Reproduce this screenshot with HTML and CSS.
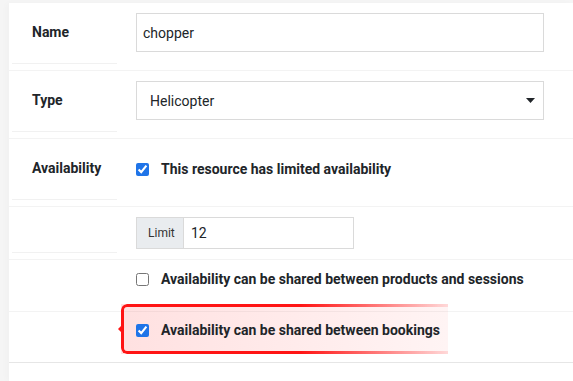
FILE: index.html
```html
<!DOCTYPE html>
<html lang="en">
<head>
<meta charset="utf-8">
<title>Resource</title>
<link rel="stylesheet" href="styles.css">
</head>
<body>
<div class="form">
  <div class="row">
    <div class="label">Name</div>
    <div class="value v-field"><input class="text-input" type="text" value="chopper"></div>
  </div>
  <div class="row">
    <div class="label">Type</div>
    <div class="value v-field">
      <div class="select"><span>Helicopter</span><svg class="caret" width="9" height="5" viewBox="0 0 9 5"><path d="M0 0h9L4.5 5z" fill="#212529"/></svg></div>
    </div>
  </div>
  <div class="row">
    <div class="label">Availability</div>
    <div class="value v-check-first">
      <label class="check"><input type="checkbox" checked><span>This resource has limited availability</span></label>
    </div>
  </div>
  <div class="row">
    <div class="label"></div>
    <div class="value v-limit">
      <div class="input-group"><span class="addon">Limit</span><input class="group-input" type="text" value="12"></div>
    </div>
  </div>
  <div class="row">
    <div class="label label-plain"></div>
    <div class="value v-check-a">
      <label class="check"><input type="checkbox"><span>Availability can be shared between products and sessions</span></label>
    </div>
  </div>
  <div class="row row-last">
    <div class="highlight"></div>
    <div class="label label-plain"></div>
    <div class="value v-check-b">
      <label class="check"><input type="checkbox" checked><span>Availability can be shared between bookings</span></label>
    </div>
  </div>
</div>
</body>
</html>
```
FILE: styles.css
```css
html, body {
  margin: 0;
  padding: 0;
}
body {
  background: #f5f5f5;
  font-family: Roboto, "Liberation Sans", sans-serif;
  color: #212529;
  font-size: 14px;
  padding-top: 3px;
  min-height: 378px;
}
.form {
  margin-left: 9px;
  background: #fff;
  min-height: 378px;
  box-shadow: -3px 0 6px rgba(0,0,0,0.02);
}
.row {
  display: flex;
  position: relative;
  border-bottom: 1px solid #f3f3f3;
}
.row-last {
  border-bottom-color: #e6e6e6;
}
.label {
  width: 85px;
  margin-left: 3px;
  margin-bottom: 6px;
  padding: 10px 0 11px 20px;
  line-height: 39px;
  font-weight: 700;
  font-size: 14px;
  border-bottom: 1px solid #f1f1f1;
  flex: none;
}
.label-plain {
  border-bottom-color: transparent;
}
.value {
  flex: 1;
  padding-left: 19px;
  padding-right: 29px;
  position: relative;
}
.v-field {
  padding-top: 10px;
  padding-bottom: 18px;
}
.text-input {
  box-sizing: border-box;
  width: 408px;
  height: 39px;
  border: 1px solid #dadada;
  padding: 0 6px;
  margin: 0;
  font: 14px Roboto, "Liberation Sans", sans-serif;
  color: #212529;
  display: block;
  outline: none;
}
.select {
  box-sizing: border-box;
  width: 408px;
  height: 39px;
  border: 1px solid #dadada;
  padding: 0 8px 0 13px;
  display: flex;
  align-items: center;
  justify-content: space-between;
}
.caret {
  display: block;
}
.v-check-first {
  padding-top: 20px;
  padding-bottom: 27px;
}
.v-check-a {
  padding-top: 9px;
  padding-bottom: 22px;
}
.v-check-b {
  padding-top: 8px;
  padding-bottom: 22px;
}
.check {
  display: flex;
  align-items: center;
  gap: 12px;
  line-height: 20px;
  font-weight: 700;
  font-size: 14px;
}
.check input {
  width: 13px;
  height: 13px;
  margin: 0;
  accent-color: #1f74e8;
  flex: none;
}
.v-limit {
  padding-top: 10px;
  padding-bottom: 10px;
}
.input-group {
  display: flex;
  width: 218px;
  height: 32px;
  box-sizing: border-box;
  border: 1px solid #dadada;
}
.addon {
  background: #e9ecef;
  border-right: 1px solid #dadada;
  width: 47px;
  box-sizing: border-box;
  padding-left: 11px;
  display: flex;
  align-items: center;
  font-size: 12px;
  color: #333;
}
.group-input {
  flex: 1;
  min-width: 0;
  border: none;
  margin: 0;
  padding: 0 7px;
  font: 14px Roboto, "Liberation Sans", sans-serif;
  color: #212529;
  outline: none;
}
.highlight {
  position: absolute;
  left: 112px;
  top: -8px;
  width: 327px;
  height: 50px;
  background: linear-gradient(90deg, rgba(255,40,40,0.14), rgba(255,40,40,0.05));
}
.highlight::before {
  content: "";
  position: absolute;
  inset: 0;
  border: 3px solid #ff1414;
  border-right: none;
  border-radius: 6px 0 0 6px;
  -webkit-mask-image: linear-gradient(90deg, #000 55%, rgba(0,0,0,0.12) 100%);
  mask-image: linear-gradient(90deg, #000 55%, rgba(0,0,0,0.12) 100%);
}
.highlight::after {
  content: "";
  position: absolute;
  left: -3px;
  top: 22px;
  width: 0;
  height: 0;
  border-top: 3px solid transparent;
  border-bottom: 3px solid transparent;
  border-right: 3px solid #ff1414;
}
```
